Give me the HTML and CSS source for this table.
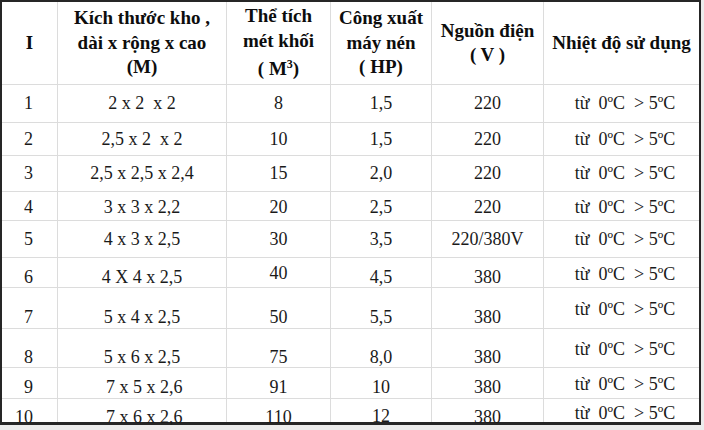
FILE: index.html
```html
<!DOCTYPE html>
<html lang="vi">
<head>
<meta charset="utf-8">
<title>Bảng kho lạnh</title>
<link rel="stylesheet" href="styles.css">
</head>
<body>
<div class="frame">
  <div class="grid">
    <div class="row head">
      <div class="h"><span>I</span></div>
      <div class="h"><span>Kích thước kho ,<br>dài x rộng x cao<br>(M)</span></div>
      <div class="h"><span>Thể tích<br>mét khối<br><span class="l3">( M<sup>3</sup>)</span></span></div>
      <div class="h"><span>Công xuất<br>máy nén<br>( HP)</span></div>
      <div class="h"><span>Nguồn điện<br>( V )</span></div>
      <div class="h last"><span>Nhiệt độ sử dụng</span></div>
    </div>
    <div class="row r1">
      <div class="c n">1</div><div class="c">2 x 2  x 2</div><div class="c">8</div><div class="c">1,5</div><div class="c">220</div><div class="c t">từ  0ºC  &gt; 5ºC</div>
    </div>
    <div class="row r2">
      <div class="c n">2</div><div class="c">2,5 x 2  x 2</div><div class="c">10</div><div class="c">1,5</div><div class="c">220</div><div class="c t">từ  0ºC  &gt; 5ºC</div>
    </div>
    <div class="row r3">
      <div class="c n">3</div><div class="c">2,5 x 2,5 x 2,4</div><div class="c">15</div><div class="c">2,0</div><div class="c">220</div><div class="c t">từ  0ºC  &gt; 5ºC</div>
    </div>
    <div class="row r4">
      <div class="c n">4</div><div class="c">3 x 3 x 2,2</div><div class="c">20</div><div class="c">2,5</div><div class="c">220</div><div class="c t">từ  0ºC  &gt; 5ºC</div>
    </div>
    <div class="row r5">
      <div class="c n">5</div><div class="c">4 x 3 x 2,5</div><div class="c">30</div><div class="c">3,5</div><div class="c">220/380V</div><div class="c t">từ  0ºC  &gt; 5ºC</div>
    </div>
    <div class="row r6">
      <div class="c n">6</div><div class="c">4 X 4 x 2,5</div><div class="c up">40</div><div class="c">4,5</div><div class="c">380</div><div class="c t">từ  0ºC  &gt; 5ºC</div>
    </div>
    <div class="row r7">
      <div class="c n">7</div><div class="c">5 x 4 x 2,5</div><div class="c">50</div><div class="c">5,5</div><div class="c">380</div><div class="c t">từ  0ºC  &gt; 5ºC</div>
    </div>
    <div class="row r8">
      <div class="c n">8</div><div class="c">5 x 6 x 2,5</div><div class="c">75</div><div class="c">8,0</div><div class="c">380</div><div class="c t">từ  0ºC  &gt; 5ºC</div>
    </div>
    <div class="row r9">
      <div class="c n">9</div><div class="c"> 7 x 5 x 2,6</div><div class="c">91</div><div class="c">10</div><div class="c">380</div><div class="c t">từ  0ºC  &gt; 5ºC</div>
    </div>
    <div class="row r10">
      <div class="c n">10</div><div class="c"> 7 x 6 x 2,6</div><div class="c">110</div><div class="c up">12</div><div class="c">380</div><div class="c t">từ  0ºC  &gt; 5ºC</div>
    </div>
  </div>
</div>
</body>
</html>
```

FILE: styles.css
```css
html, body {
  margin: 0;
  padding: 0;
}
body {
  background: #ececec;
  font-family: "Liberation Serif", "Times New Roman", serif;
  color: #1a1a1a;
}
.frame {
  width: 697px;
  height: 420px;
  padding: 2px 2px 3px 2px;
  background: #262626;
}
.grid {
  display: grid;
  grid-template-columns: 56px 169px 104px 101px 112px 155px;
  grid-template-rows: 83px 38px 33px 36px 29px 37px 30px 41px 39px 31px 23px;
  background: #ffffff;
  height: 420px;
}
.row {
  display: contents;
}
.h, .c {
  box-sizing: border-box;
  border-right: 1px solid #dcdcdc;
  border-bottom: 1px solid #dcdcdc;
  min-width: 0;
}
.row > div:last-child {
  border-right: none;
}
.r10 > div {
  border-bottom: none;
}
.h {
  display: flex;
  align-items: center;
  justify-content: center;
  text-align: center;
  font-weight: bold;
  font-size: 19px;
  line-height: 24.5px;
  color: #0d0d0d;
  white-space: nowrap;
}
.h sup {
  font-size: 12px;
  line-height: 0;
  vertical-align: 7px;
}
.l3 {
  display: inline-block;
  margin-top: 4px;
}
.c {
  font-size: 18px;
  line-height: 22px;
  text-align: center;
  white-space: pre;
}
.c.n {
  text-align: right;
  padding-right: 24px;
}
.c.t {
  padding-left: 7px;
}
.r1 > .c { padding-top: 7px; }
.r2 > .c { padding-top: 5px; }
.r3 > .c { padding-top: 6px; }
.r4 > .c { padding-top: 4px; }
.r5 > .c { padding-top: 7px; }
.r6 > .c { padding-top: 8px; }
.r6 > .c.up { padding-top: 4px; }
.r6 > .c.t { padding-top: 5px; }
.r7 > .c { padding-top: 18px; }
.r7 > .c.t { padding-top: 10px; }
.r8 > .c { padding-top: 17px; }
.r8 > .c.t { padding-top: 9px; }
.r9 > .c { padding-top: 8px; }
.r9 > .c.t { padding-top: 5px; }
.r10 > .c { padding-top: 7px; }
.r10 > .c.up { padding-top: 6px; }
.r10 > .c.t { padding-top: 3px; }
```
